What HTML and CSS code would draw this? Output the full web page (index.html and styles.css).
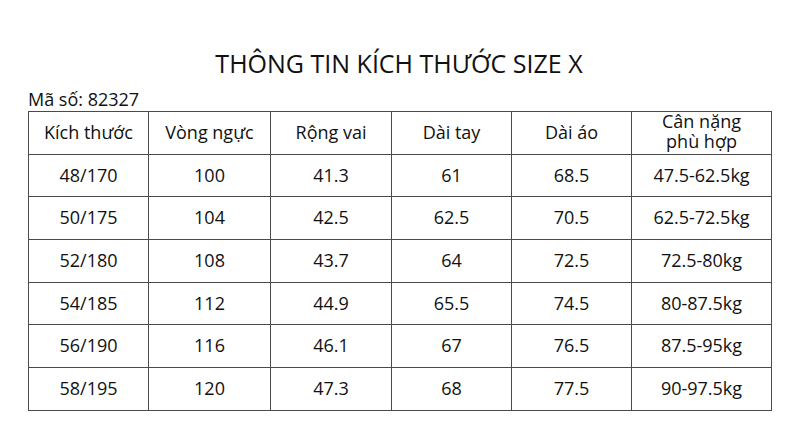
FILE: index.html
```html
<!DOCTYPE html>
<html lang="vi">
<head>
<meta charset="utf-8">
<link rel="stylesheet" href="styles.css">
</head>
<body>
<h1 class="title">THÔNG TIN KÍCH THƯỚC SIZE X</h1>
<div class="code">Mã số: 82327</div>
<table class="size-table">
  <colgroup>
    <col class="c1"><col class="c2"><col class="c3"><col class="c4"><col class="c5"><col class="c6">
  </colgroup>
  <thead>
    <tr><th>Kích thước</th><th>Vòng ngực</th><th>Rộng vai</th><th>Dài tay</th><th>Dài áo</th><th class="two">Cân nặng<br>phù hợp</th></tr>
  </thead>
  <tbody>
    <tr><td>48/170</td><td>100</td><td>41.3</td><td>61</td><td>68.5</td><td>47.5-62.5kg</td></tr>
    <tr><td>50/175</td><td>104</td><td>42.5</td><td>62.5</td><td>70.5</td><td>62.5-72.5kg</td></tr>
    <tr><td>52/180</td><td>108</td><td>43.7</td><td>64</td><td>72.5</td><td>72.5-80kg</td></tr>
    <tr><td>54/185</td><td>112</td><td>44.9</td><td>65.5</td><td>74.5</td><td>80-87.5kg</td></tr>
    <tr><td>56/190</td><td>116</td><td>46.1</td><td>67</td><td>76.5</td><td>87.5-95kg</td></tr>
    <tr><td>58/195</td><td>120</td><td>47.3</td><td>68</td><td>77.5</td><td>90-97.5kg</td></tr>
  </tbody>
</table>
</body>
</html>
```
FILE: styles.css
```css
html, body {
  margin: 0;
  padding: 0;
  background: #ffffff;
}
body {
  font-family: "Open Sans", "Noto Sans", sans-serif;
  color: #111111;
}
.title {
  margin: 0;
  padding: 48px 0 0 8px;
  font-size: 25px;
  font-weight: 400;
  line-height: 30px;
  text-align: center;
}
.code {
  margin-top: 10px;
  padding-left: 28px;
  font-size: 18px;
  line-height: 23px;
}
.size-table {
  margin-left: 28px;
  width: 743px;
  border-collapse: collapse;
  table-layout: fixed;
}
.c1 { width: 120px; }
.c2 { width: 122px; }
.c3 { width: 121px; }
.c4 { width: 120px; }
.c5 { width: 120px; }
.c6 { width: 140px; }
.size-table th,
.size-table td {
  border: 1px solid #4a4a4a;
  height: 39.7px;
  padding: 0 0 2px;
  text-align: center;
  vertical-align: middle;
  font-size: 18px;
  font-weight: 400;
  line-height: 22px;
}
.size-table th.two {
  line-height: 19.5px;
  padding-bottom: 2px;
}
```
